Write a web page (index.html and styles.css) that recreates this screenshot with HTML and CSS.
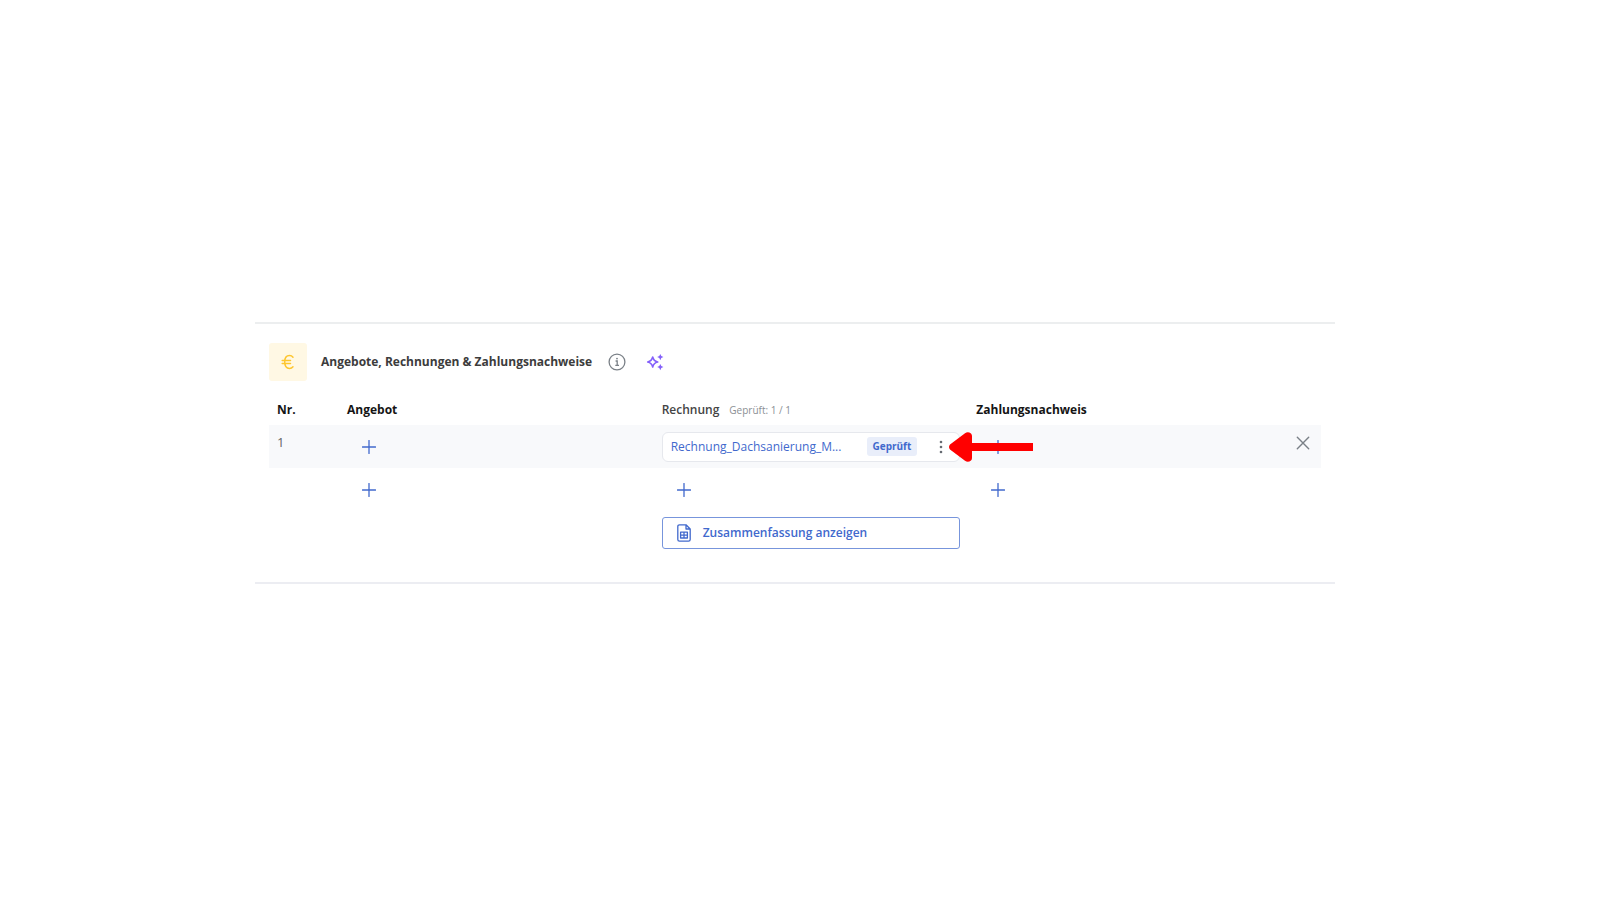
FILE: index.html
```html
<!DOCTYPE html>
<html lang="de">
<head>
    <meta charset="UTF-8">
    <meta name="viewport" content="width=device-width, initial-scale=1.0">
    <title>Angebote, Rechnungen &amp; Zahlungsnachweise</title>
    <link rel="stylesheet" href="styles.css">
</head>
<body>
    <svg class="sprite" aria-hidden="true">
        <symbol id="plus" viewBox="0 0 14 14">
            <path d="M7 0.500v13M0.500 7h13" fill="none" stroke="currentColor" stroke-width="1.300" stroke-linecap="round"/>
        </symbol>
    </svg>

    <section class="panel">
        <header class="panel-header">
            <span class="euro-icon">
                <svg width="14" height="16" viewBox="0 0 14 16" fill="none" stroke="currentColor" stroke-width="1.500" stroke-linecap="round">
                    <path d="M12 3.200C11.100 2.100 9.900 1.600 8.500 1.600C5.500 1.600 3.700 4.300 3.700 8s1.800 6.400 4.800 6.400c1.400 0 2.600-.500 3.500-1.600M1.200 6.400h8.300M1.200 9.400h8.300"/>
                </svg>
            </span>
            <h2 class="panel-title">Angebote, Rechnungen &amp; Zahlungsnachweise</h2>
            <button class="icon-btn info-btn" aria-label="Information">
                <svg width="18" height="18" viewBox="0 0 18 18" fill="none" stroke="currentColor" stroke-width="1.300">
                    <circle cx="9" cy="9" r="7.900"/>
                    <path d="M7.600 8h1.600v4.300M7.300 12.300h3.700"/>
                    <circle cx="9" cy="5.600" r="0.900" fill="currentColor" stroke="none"/>
                </svg>
            </button>
            <button class="icon-btn ai-btn" aria-label="KI-Assistent">
                <svg width="18" height="18" viewBox="0 0 18 18">
                    <path d="M6.700 4c.7 3.100 1.600 4.200 5 5c-3.400.8-4.300 1.900-5 5c-.7-3.100-1.600-4.200-5-5c3.400-.8 4.300-1.900 5-5z" fill="none" stroke="currentColor" stroke-width="1.600" stroke-linejoin="round"/>
                    <path d="M14.300 1l1 2.100 2.100 1-2.100 1-1 2.100-1-2.100-2.100-1 2.100-1zM14.300 11l1 2.100 2.100 1-2.100 1-1 2.100-1-2.100-2.100-1 2.100-1z" fill="currentColor"/>
                </svg>
            </button>
        </header>

        <table class="doc-table">
            <colgroup>
                <col class="col-nr">
                <col>
                <col>
                <col>
                <col class="col-remove">
            </colgroup>
            <thead>
                <tr>
                    <th scope="col">Nr.</th>
                    <th scope="col">Angebot</th>
                    <th scope="col"><span class="muted-head">Rechnung</span><span class="checked-count">Geprüft: 1 / 1</span></th>
                    <th scope="col">Zahlungsnachweis</th>
                    <td></td>
                </tr>
            </thead>
            <tbody>
                <tr class="filled">
                    <td class="nr">1</td>
                    <td><button class="icon-btn add-btn" aria-label="Angebot hinzufügen"><svg width="14" height="14"><use href="#plus"/></svg></button></td>
                    <td>
                        <div class="file">
                            <a class="file-name" href="#">Rechnung_Dachsanierung_M...</a>
                            <span class="badge">Geprüft</span>
                            <button class="icon-btn menu-btn" aria-label="Menü">
                                <svg width="4" height="14" viewBox="0 0 4 14" fill="currentColor">
                                    <circle cx="2" cy="2" r="1.300"/>
                                    <circle cx="2" cy="7" r="1.300"/>
                                    <circle cx="2" cy="12" r="1.300"/>
                                </svg>
                            </button>
                            <svg class="arrow" width="84" height="30" viewBox="0 0 84 30" fill="#ff0000" aria-hidden="true">
                                <path d="M1 12.500L16 1.200Q19 -1 22 1.500Q23 2.500 23 4V11H84V19H23V26Q23 27.500 22 28.500Q19 31 16 28.800L1 17.500Q-1 15 1 12.500z"/>
                            </svg>
                        </div>
                    </td>
                    <td><button class="icon-btn add-btn" aria-label="Zahlungsnachweis hinzufügen"><svg width="14" height="14"><use href="#plus"/></svg></button></td>
                    <td class="remove">
                        <button class="icon-btn" aria-label="Zeile entfernen">
                            <svg width="14" height="14" viewBox="0 0 14 14" fill="none" stroke="currentColor" stroke-width="1.400" stroke-linecap="round">
                                <path d="M1.300 1.300l11.400 11.400M12.700 1.300L1.300 12.700"/>
                            </svg>
                        </button>
                    </td>
                </tr>
                <tr>
                    <td></td>
                    <td><button class="icon-btn add-btn" aria-label="Neues Angebot"><svg width="14" height="14"><use href="#plus"/></svg></button></td>
                    <td><button class="icon-btn add-btn" aria-label="Neue Rechnung"><svg width="14" height="14"><use href="#plus"/></svg></button></td>
                    <td><button class="icon-btn add-btn" aria-label="Neuer Zahlungsnachweis"><svg width="14" height="14"><use href="#plus"/></svg></button></td>
                    <td></td>
                </tr>
                <tr>
                    <td></td>
                    <td></td>
                    <td>
                        <button class="summary-btn">
                            <svg width="14" height="18" viewBox="0 0 14 18" fill="none" stroke="currentColor" stroke-width="1.300" stroke-linejoin="round">
                                <path d="M9 .8H2.500Q.8.8.8 2.500v13q0 1.700 1.700 1.700h9q1.700 0 1.700-1.700V5zM9 .8V5h4.200"/>
                                <path d="M3.600 8.200h6.800v5.800H3.600zM3.600 11.100h6.800M7 8.200V14"/>
                            </svg>
                            Zusammenfassung anzeigen
                        </button>
                    </td>
                    <td></td>
                    <td></td>
                </tr>
            </tbody>
        </table>
    </section>
</body>
</html>
```
FILE: styles.css
```css
* {
    box-sizing: border-box;
}
body {
    font-family: "Open Sans", "Noto Sans", sans-serif;
    font-size: 12px;
    line-height: 18px;
    color: #3c3c3c;
    background-color: #fff;
    margin: 0;
    padding: 322px 265px 20px 255px;
}
.sprite {
    display: none;
}
svg {
    display: block;
    flex-shrink: 0;
}
button {
    font-family: inherit;
    cursor: pointer;
}
.panel {
    padding: 19px 14px 28px;
    border-top: 2px solid #eceeef;
    border-bottom: 2px solid #ecedf2;
}
.panel-header {
    display: flex;
    align-items: center;
    height: 38px;
}
.euro-icon {
    display: flex;
    align-items: center;
    justify-content: center;
    width: 38px;
    height: 38px;
    margin-right: 14px;
    border-radius: 3px;
    background-color: #fff8e4;
    color: #fdc62f;
}
.panel-title {
    margin: 0;
    font-size: 12px;
    font-weight: 700;
}
.icon-btn {
    display: flex;
    align-items: center;
    justify-content: center;
    padding: 0;
    border: none;
    background: none;
    color: #7a8087;
}
.info-btn {
    margin-left: 16px;
}
.ai-btn {
    margin-left: 20px;
    color: #8460fa;
}
.doc-table {
    width: 100%;
    margin-top: 14px;
    border-collapse: collapse;
    table-layout: fixed;
}
.col-nr {
    width: 70px;
}
.col-remove {
    width: 38px;
}
th {
    height: 30px;
    padding: 0 8px;
    color: #151515;
    font-size: 12px;
    font-weight: 700;
    text-align: left;
    white-space: nowrap;
}
.muted-head {
    color: #444;
    font-weight: 600;
}
.checked-count {
    margin-left: 10px;
    color: #8b8f94;
    font-size: 10px;
    font-weight: 400;
}
td {
    height: 43px;
    padding: 0 8px;
}
thead td {
    height: 30px;
}
.filled {
    background-color: #f8f9fb;
}
.nr {
    padding-top: 8px;
    color: #666;
    font-size: 13px;
    vertical-align: top;
}
.add-btn {
    width: 44px;
    height: 30px;
    color: #4169cd;
}
.file {
    position: relative;
    display: flex;
    align-items: center;
    height: 30px;
    padding: 0 8px;
    border: 1px solid #e6e8ed;
    border-radius: 6px;
    background-color: #fff;
}
.file-name {
    flex: 1;
    color: #4169cd;
    font-weight: 500;
    text-decoration: none;
    white-space: nowrap;
}
.badge {
    padding: 0 6px;
    border-radius: 3px;
    background-color: #e9eefa;
    color: #4169cd;
    font-size: 10px;
    font-weight: 700;
    line-height: 19px;
}
.menu-btn {
    width: 20px;
    height: 20px;
    margin-left: 14px;
    color: #666b72;
}
.arrow {
    position: absolute;
    top: -1px;
    left: 286px;
    z-index: 1;
}
.remove {
    padding: 11px 0 0 13px;
    vertical-align: top;
}
.summary-btn {
    display: flex;
    align-items: center;
    gap: 12px;
    width: 100%;
    height: 32px;
    padding: 0 14px;
    border: 1px solid #7795dc;
    border-radius: 3px;
    background-color: #fff;
    color: #4169cd;
    font-size: 12px;
    font-weight: 600;
}
```
